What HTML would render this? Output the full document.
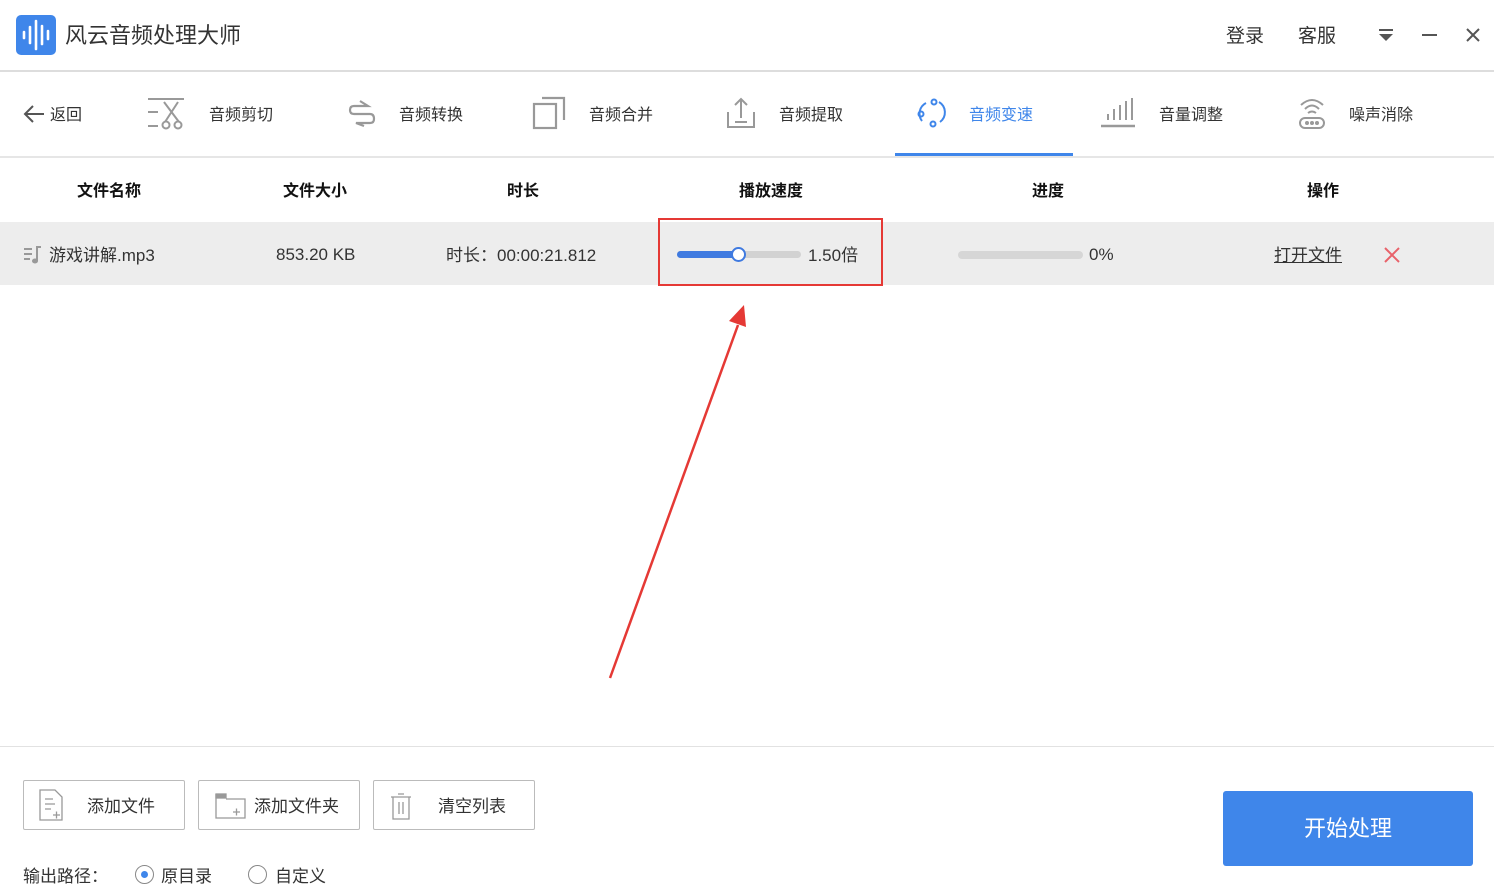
<!DOCTYPE html>
<html><head><meta charset="utf-8"><style>
*{margin:0;padding:0;box-sizing:border-box}
body{width:1494px;height:890px;position:relative;background:#fff;font-family:"Liberation Sans","Noto Sans CJK SC",sans-serif;color:#333;overflow:hidden}
.a{position:absolute;white-space:nowrap}
.tab{font-size:16px;color:#333;top:101px}
.h{font-size:16px;font-weight:bold;color:#111;top:177px}
.btn{position:absolute;top:780px;height:50px;border:1px solid #bbb;border-radius:2px;background:#fff}
.btn span{position:absolute;top:11px;font-size:17px;color:#333}
</style></head><body>
<div class="a" style="left:16px;top:15px;width:40px;height:40px;background:#3f86ea;border-radius:5px"></div>
<svg class="a" style="left:16px;top:15px" width="40" height="40"><g stroke="#fff" stroke-width="2.6" stroke-linecap="round"><line x1="8" y1="17" x2="8" y2="23"/><line x1="14" y1="12" x2="14" y2="28"/><line x1="20" y1="6" x2="20" y2="34"/><line x1="26" y1="11" x2="26" y2="29"/><line x1="32" y1="16" x2="32" y2="24"/></g></svg>
<div class="a" style="left:65px;top:18px;font-size:22px;color:#333">风云音频处理大师</div>
<div class="a" style="left:1226px;top:21px;font-size:19px;color:#333">登录</div>
<div class="a" style="left:1298px;top:21px;font-size:19px;color:#333">客服</div>
<svg class="a" style="left:1378px;top:28px" width="16" height="14"><rect x="1" y="1" width="14" height="2" fill="#555"/><path d="M1 6H15L8 13Z" fill="#555"/></svg>
<div class="a" style="left:1422px;top:34px;width:15px;height:2px;background:#555"></div>
<svg class="a" style="left:1465px;top:27px" width="16" height="16"><path d="M2 2L14 14M14 2L2 14" stroke="#555" stroke-width="2"/></svg>
<div class="a" style="left:0;top:70px;width:1494px;height:2px;background:#ddd"></div>
<svg class="a" style="left:22px;top:103px" width="24" height="22"><path d="M22 11H3M11 3L3 11L11 19" stroke="#555" stroke-width="2" fill="none"/></svg>
<div class="a tab" style="left:50px">返回</div>
<svg class="a" style="left:146px;top:96px" width="40" height="34" fill="none" stroke="#999" stroke-width="2"><line x1="2" y1="3" x2="38" y2="3"/><line x1="2" y1="16" x2="12" y2="16"/><line x1="2" y1="30" x2="12" y2="30"/><path d="M18 6L33 26M32 6L19 26"/><circle cx="20" cy="29" r="3.5"/><circle cx="32" cy="29" r="3.5"/></svg>
<div class="a tab" style="left:209px">音频剪切</div>
<svg class="a" style="left:348px;top:98px" width="28" height="30" fill="none" stroke="#999" stroke-width="2.2"><path d="M12 3L20 8H6Q2 8 2 12Q2 16 6 16H22Q26 16 26 21Q26 25 22 25H8L16 28"/></svg>
<div class="a tab" style="left:399px">音频转换</div>
<svg class="a" style="left:532px;top:96px" width="34" height="34" fill="none" stroke="#999" stroke-width="2.2"><rect x="2" y="8" width="22" height="24"/><path d="M10 2H32V24"/></svg>
<div class="a tab" style="left:589px">音频合并</div>
<svg class="a" style="left:726px;top:96px" width="30" height="34" fill="none" stroke="#999" stroke-width="2"><path d="M15 22V3M9 9L15 3L21 9M2 16V31H28V16M9 26H21"/></svg>
<div class="a tab" style="left:779px">音频提取</div>
<svg class="a" style="left:916px;top:98px" width="32" height="30" fill="none" stroke="#3f86ea" stroke-width="2"><path d="M10 5A12 12 0 0 0 6 23M23 4A12 12 0 0 1 24 24"/><circle cx="18" cy="4" r="2.5"/><circle cx="5" cy="16" r="2.5"/><circle cx="17" cy="26" r="2.5"/></svg>
<div class="a tab" style="left:969px;color:#3f86ea">音频变速</div>
<svg class="a" style="left:1100px;top:96px" width="36" height="34" fill="none" stroke="#999" stroke-width="2"><path d="M8 24V18M14 24V13M20 24V9M26 24V5M32 24V2"/><line x1="1" y1="30" x2="35" y2="30" stroke-width="2.5"/></svg>
<div class="a tab" style="left:1159px">音量调整</div>
<svg class="a" style="left:1296px;top:96px" width="32" height="34" fill="none" stroke="#999" stroke-width="2"><path d="M5 9Q16 -1 27 9M9 13Q16 6 23 13M12 17Q16 14 20 17"/><rect x="4" y="22" width="24" height="10" rx="5"/><circle cx="11" cy="27" r="1" fill="#999"/><circle cx="16" cy="27" r="1" fill="#999"/><circle cx="21" cy="27" r="1" fill="#999"/></svg>
<div class="a tab" style="left:1349px">噪声消除</div>
<div class="a" style="left:895px;top:153px;width:178px;height:4px;background:#3f86ea"></div>
<div class="a" style="left:0;top:156px;width:1494px;height:2px;background:#e6e6e6"></div>
<div class="a h" style="left:77px">文件名称</div>
<div class="a h" style="left:283px">文件大小</div>
<div class="a h" style="left:507px">时长</div>
<div class="a h" style="left:739px">播放速度</div>
<div class="a h" style="left:1032px">进度</div>
<div class="a h" style="left:1307px">操作</div>
<div class="a" style="left:0;top:222px;width:1494px;height:63px;background:#ededed"></div>
<svg class="a" style="left:23px;top:245px" width="20" height="20" fill="#999"><rect x="1" y="3" width="8" height="2"/><rect x="1" y="8" width="8" height="2"/><rect x="1" y="13" width="6" height="2"/><rect x="13" y="1" width="2" height="15"/><rect x="13" y="1" width="5" height="2"/><ellipse cx="12" cy="16" rx="3" ry="2.5"/></svg>
<div class="a" style="left:49px;top:241px;font-size:17px;color:#333">游戏讲解.mp3</div>
<div class="a" style="left:276px;top:245px;font-size:17px;color:#333">853.20 KB</div>
<div class="a" style="left:446px;top:241px;font-size:17px;color:#333">时长：00:00:21.812</div>
<div class="a" style="left:677px;top:251px;width:124px;height:7px;background:#d2d2d2;border-radius:4px"></div>
<div class="a" style="left:677px;top:251px;width:62px;height:7px;background:#3f7ae0;border-radius:4px"></div>
<div class="a" style="left:731px;top:247px;width:15px;height:15px;border:2px solid #3f7ae0;background:#fff;border-radius:50%"></div>
<div class="a" style="left:808px;top:241px;font-size:17px;color:#333">1.50倍</div>
<div class="a" style="left:658px;top:218px;width:225px;height:68px;border:2px solid #e53935"></div>
<div class="a" style="left:958px;top:251px;width:125px;height:8px;background:#d6d6d6;border-radius:4px"></div>
<div class="a" style="left:1089px;top:245px;font-size:17px;color:#333">0%</div>
<div class="a" style="left:1274px;top:241px;font-size:17px;color:#333;text-decoration:underline">打开文件</div>
<svg class="a" style="left:1383px;top:246px" width="18" height="18"><path d="M2 2L16 16M16 2L2 16" stroke="#e8626a" stroke-width="2"/></svg>
<svg class="a" style="left:0;top:0" width="1494" height="890"><line x1="610" y1="678" x2="738" y2="325" stroke="#e53935" stroke-width="2.5"/><path d="M744 305L746 327L729 321Z" fill="#e53935"/></svg>
<div class="a" style="left:0;top:746px;width:1494px;height:1px;background:#e2e2e2"></div>
<div class="btn" style="left:23px;width:162px"><span style="left:63px">添加文件</span>
<svg class="a" style="left:14px;top:8px" width="26" height="32" fill="none" stroke="#999" stroke-width="1.3"><path d="M2 1H17L24 8V31H2Z"/><path d="M7 10H15M7 15H17M7 20H13M15 26H22M18.5 22.5V29.5"/></svg></div>
<div class="btn" style="left:198px;width:162px"><span style="left:55px">添加文件夹</span>
<svg class="a" style="left:15px;top:11px" width="34" height="28" fill="none" stroke="#999" stroke-width="1.3"><rect x="2" y="2" width="10" height="4" fill="#999"/><path d="M2 2V26H31V7H12"/><path d="M19 20H26M22.5 16.5V23.5"/></svg></div>
<div class="btn" style="left:373px;width:162px"><span style="left:64px">清空列表</span>
<svg class="a" style="left:15px;top:10px" width="24" height="30" fill="none" stroke="#999" stroke-width="1.3"><path d="M2 6H22M9 3H15M4 6V28H20V6M10 11V23M14 11V23"/></svg></div>
<div class="a" style="left:23px;top:862px;font-size:17px;color:#333">输出路径：</div>
<div class="a" style="left:135px;top:865px;width:19px;height:19px;border:1px solid #888;border-radius:50%"></div>
<div class="a" style="left:141px;top:871px;width:7px;height:7px;background:#3f86ea;border-radius:50%"></div>
<div class="a" style="left:161px;top:862px;font-size:17px;color:#333">原目录</div>
<div class="a" style="left:248px;top:865px;width:19px;height:19px;border:1px solid #888;border-radius:50%"></div>
<div class="a" style="left:275px;top:862px;font-size:17px;color:#333">自定义</div>
<div class="a" style="left:1223px;top:791px;width:250px;height:75px;background:#3f86ea;border-radius:3px;color:#fff;font-size:22px;text-align:center;line-height:75px">开始处理</div>
</body></html>
